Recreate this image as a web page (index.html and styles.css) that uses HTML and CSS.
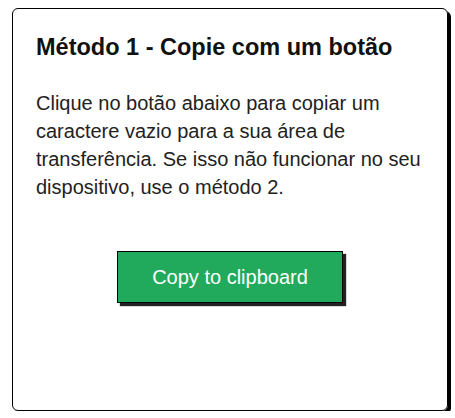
FILE: index.html
```html
<!DOCTYPE html>
<html lang="pt">
<head>
<meta charset="UTF-8" />
<meta name="viewport" content="width=device-width, initial-scale=1" />
<title>Método 1</title>
<link rel="stylesheet" href="styles.css">
</head>
<body>
<div class="card">
  <h2>Método 1 - Copie com um botão</h2>
  <p>Clique no botão abaixo para copiar um caractere vazio para a sua área de transferência. Se isso não funcionar no seu dispositivo, use o método 2.</p>
  <div class="actions">
    <button class="copy">Copy to clipboard</button>
  </div>
</div>
</body>
</html>
```

FILE: styles.css
```css
body { margin: 0; padding: 8px 0 0 12px; font-family: Arial, "Liberation Sans", sans-serif; background: #fff; color: #222; }
.card { box-sizing: border-box; width: 436px; height: 403px; border: 1px solid #000; border-radius: 6px; box-shadow: 3px 3px 0 #000; padding: 24px 23px; }
h2 { font-size: 23.5px; margin: 0 0 28px; color: #111; line-height: 28px; }
p { font-size: 20px; line-height: 28px; margin: 0; }
.actions { text-align: center; margin-top: 50px; }
.copy { width: 226px; height: 52px; background: #22aa5c; color: #fff; border: 1px solid #000; box-shadow: 3px 3px 1px #222; font-family: Arial, "Liberation Sans", sans-serif; font-size: 20px; cursor: pointer; }
```
